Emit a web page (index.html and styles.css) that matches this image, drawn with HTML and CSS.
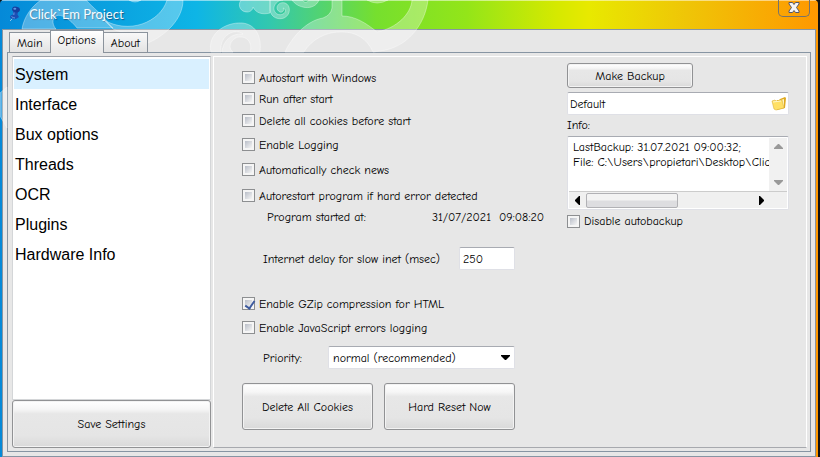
FILE: index.html
```html
<!DOCTYPE html>
<html lang="en">
<head>
<meta charset="utf-8">
<title>Click`Em Project</title>
<link rel="stylesheet" href="styles.css">
</head>
<body>
<div class="window">
  <header class="titlebar">
    <svg class="app-icon" width="12" height="16" viewBox="0 0 12 16" aria-hidden="true">
      <path d="M1 15L4 12" stroke="#8fc3ea"/>
      <path d="M4 5L9 6L8.500 8.500L10 11Q6 15 1 11.500Q1 9 4 8.500Z" fill="#1c4fb4"/>
      <ellipse cx="7" cy="3.500" rx="4" ry="2.800" fill="#163f9f" transform="rotate(12 7 3.500)"/>
      <ellipse cx="5.800" cy="2.800" rx="1.500" ry="1" fill="#5f96e2"/>
      <path d="M5 6.500L4.800 9M2.500 10.500Q4 12 6 12" stroke="#639be4" fill="none"/>
    </svg>
    <h1>Click`Em Project</h1>
    <button class="close" type="button" aria-label="Close">
      <svg width="12" height="11" viewBox="0 0 12 11"><path d="M1 .5H4.500L6 2.500L7.500 .5H11V2L8.500 5.500L11 9V10.500H7.500L6 8.500L4.500 10.500H1V9L3.500 5.500L1 2Z" fill="#f4f4f4" stroke="#55566a"/></svg>
    </button>
  </header>
  <main class="client">
    <div class="tabs" role="tablist">
      <button type="button" role="tab">Main</button>
      <button type="button" role="tab" class="active" aria-selected="true">Options</button>
      <button type="button" role="tab">About</button>
    </div>
    <div class="page">
      <div class="side">
        <nav class="list">
          <a href="#system" class="current">System</a>
          <a href="#interface">Interface</a>
          <a href="#bux">Bux options</a>
          <a href="#threads">Threads</a>
          <a href="#ocr">OCR</a>
          <a href="#plugins">Plugins</a>
          <a href="#hardware">Hardware Info</a>
        </nav>
        <button type="button" class="btn save">Save Settings</button>
      </div>
      <form class="panel" id="system">
        <div class="general">
          <label class="check"><input type="checkbox">Autostart with Windows</label>
          <label class="check"><input type="checkbox">Run after start</label>
          <label class="check"><input type="checkbox">Delete all cookies before start</label>
          <label class="check"><input type="checkbox">Enable Logging</label>
          <label class="check"><input type="checkbox">Automatically check news</label>
          <label class="check"><input type="checkbox">Autorestart program if hard error detected</label>
          <div class="started"><span>Program started at:</span><time>31/07/2021&nbsp; 09:08:20</time></div>
          <div class="field"><label for="delay">Internet delay for slow inet (msec)</label><input id="delay" class="box delay" type="text" value="250"></div>
          <label class="check"><input type="checkbox" checked>Enable GZip compression for HTML</label>
          <label class="check"><input type="checkbox">Enable JavaScript errors logging</label>
          <div class="field"><label for="priority">Priority:</label>
            <span class="combo"><select id="priority" class="box"><option>normal (recommended)</option></select>
            <svg width="9" height="5" viewBox="0 0 9 5" aria-hidden="true"><path d="M0 0H9V1L5 5H4L0 1Z"/></svg></span>
          </div>
          <div class="actions"><button type="button" class="btn">Delete All Cookies</button><button type="button" class="btn">Hard Reset Now</button></div>
        </div>
        <div class="backup">
          <button type="button" class="btn make">Make Backup</button>
          <div class="box file">
            <input type="text" value="Default" aria-label="Backup name">
            <button type="button" aria-label="Browse">
              <svg width="16" height="14" viewBox="0 0 16 14"><path d="M6 3L8 3L9 2L14 0L15 1L14 11L6 13Z" fill="#dfa91f"/><path d="M7 4L13 2L13 10L7 12Z" fill="#fff6c4"/><path d="M1 4L4 3L5 4L11 3L13 11L5 13L3 12Z" fill="#ffe066" stroke="#dcb23a" stroke-width=".6"/><path d="M2 5L10 4" stroke="#fff7c8"/></svg>
            </button>
          </div>
          <label class="info" for="info">Info:</label>
          <div class="box memo">
            <textarea id="info" readonly wrap="off">LastBackup: 31.07.2021 09:00:32;
File: C:\Users\propietari\Desktop\ClickEm</textarea>
            <div class="vbar" aria-hidden="true">
              <svg width="9" height="5" viewBox="0 0 9 5"><path d="M4 0H5L9 4V5H0V4Z"/></svg>
              <svg width="9" height="5" viewBox="0 0 9 5"><path d="M0 0H9V1L5 5H4L0 1Z"/></svg>
            </div>
            <div class="hbar" aria-hidden="true">
              <svg width="5" height="9" viewBox="0 0 5 9"><path d="M5 0V9H4L0 5V4L4 0Z"/></svg>
              <span class="thumb"></span>
              <svg width="5" height="9" viewBox="0 0 5 9"><path d="M0 0V9H1L5 5V4L1 0Z"/></svg>
            </div>
          </div>
          <label class="check"><input type="checkbox">Disable autobackup</label>
        </div>
      </form>
    </div>
  </main>
  <svg class="swirls" width="440" height="130" viewBox="0 0 440 130" aria-hidden="true">
    <g class="glow">
      <path d="M22 29C24 17 31 7 41 0H86C93 8 103 15 108 23L113 28H77C71 20 61 13 56 16C51 19 53 26 56 29Z"/>
      <path d="M167 0C164 11 154 20 142 24C130 28 116 27 104 20L113 29C119 32 128 34 139 31C135 36 142 43 148 43C166 35 183 19 183 0Z"/>
      <path d="M129 0Q135 4 141 0Z"/>
      <path d="M241 0C237 6 241 12 247 12C251 12 253 9 253 7C256 13 262 15 270 13V0Z"/>
      <path d="M211 52C207 35 224 22 242 23C254 24 262 34 260 52H250C253 43 247 36 239 37C231 38 227 48 233 52H222C223 41 231 33 243 34C236 28 219 34 221 52Z"/>
      <path d="M270 10C271 18 279 20 284 18C291 15 291 5 285 3C278 1 274 9 280 12C282 13 285 10 283 8C289 10 283 17 277 14C270 9 276 0 283 0H270Z"/>
      <path d="M292 0C297 8 314 12 319 0H309Q306 5 302 0Z"/>
      <path d="M367 0Q377 6 388 0Z"/>
      <path d="M332 0H342V16C355 16 366 23 377 32C397 28 411 14 412 0H428C425 25 407 48 380 51L373 52C367 38 355 32 343 32C326 31 311 40 304 52H285C291 39 305 21 323 18Q331 15 332 8Z"/>
      <path d="M0 93L7 87V128L0 116Z"/>
    </g>
  </svg>
</div>
</body>
</html>
```

FILE: styles.css
```css
* { box-sizing: border-box; }

body {
  margin: 0;
  background: #111;
  color: #000;
  font: 12px/16px "Comic Neue", Lato, "Open Sans", sans-serif;
}

button, input, select, textarea { font: inherit; color: inherit; margin: 0; }

.window {
  position: relative;
  display: flex;
  flex-direction: column;
  min-height: 100vh;
  margin-right: 2px;
  padding: 0 2px 0 2px;
  border-radius: 4px 4px 0 0;
  background: linear-gradient(90deg, #0589d8 0, #0eb5e6 24%, #32c8ae 33%, #76df2e 46%, #93e519 57%, #d5e900 68%, #e8e900 72%, #efc507 84%, #ff9800 100%);
}

.titlebar {
  display: flex;
  align-items: flex-start;
  height: 29px;
  padding: 0 6px 0 7px;
  box-shadow: inset 0 1px rgba(255, 255, 255, .5);
}

.app-icon { margin-top: 6px; }

h1 {
  flex: 1;
  margin: 4px 0 0 8px;
  color: #f4fcff;
  font: 13px/20px Lato, "Open Sans", sans-serif;
  text-shadow: 1px 1px 1px #175985;
}

.close {
  display: flex;
  justify-content: center;
  width: 32px;
  height: 17px;
  padding: 2px 0 0;
  border: 1px solid #76736c;
  border-top: 0;
  border-radius: 0 0 5px 5px;
  background: none;
}

.client {
  flex: 1;
  display: flex;
  flex-direction: column;
  padding: 0 4px 4px;
  border: 1px solid #8795a3;
  background: #e7e7e7;
}

.tabs {
  position: relative;
  z-index: 2;
  display: flex;
  align-items: flex-end;
  height: 23px;
  margin-bottom: -1px;
  padding-left: 2px;
}

.tabs button {
  height: 21px;
  padding: 0 7px;
  border: 1px solid #8b939c;
  background: linear-gradient(#f8f8f8, #e3e3e3);
}

.tabs .active {
  height: 23px;
  margin: 0 -1px;
  padding-bottom: 4px;
  border-bottom: 0;
  background: linear-gradient(#fff, #e7e7e7);
}

.page {
  flex: 1;
  display: flex;
  gap: 2px;
  padding: 3px 3px 3px 4px;
  border: 1px solid #8795a3;
  background: #e7e7e7;
}

.side {
  display: flex;
  flex-direction: column;
  width: 199px;
}

.list {
  flex: 1;
  padding: 2px 1px;
  border: 1px solid #d4d6d8;
  border-top-color: #9da1a8;
  background: #fff;
}

.list a {
  display: block;
  padding: 1px 1px 0;
  color: #000;
  font: 16px/29px "Liberation Sans", sans-serif;
  text-decoration: none;
}

.list .current { background: #d9f0ff; }

.btn {
  border: 1px solid #919294;
  border-radius: 3px;
  background: linear-gradient(#fff 0, #f6f6f6 18%, #e7e7e7 28%, #e5e5e5 75%, #d9d9d9 100%);
  box-shadow: inset 0 0 0 1px #f3f3f3;
}

.save { height: 48px; }

.panel {
  flex: 1;
  display: flex;
  gap: 52px;
  padding: 0 17px 0 28px;
  border: 1px solid #fff;
  border-bottom-color: #a7a9ae;
}

.general {
  display: grid;
  grid-template-rows: 21px 21px 23px 25px 25px 27px 16px 67px 23px 25px 35px 47px;
  align-items: center;
  align-content: start;
  width: 273px;
  padding-top: 10px;
}

.check { display: flex; align-items: center; gap: 4px; white-space: nowrap; }

.check input {
  appearance: none;
  width: 13px;
  height: 13px;
  border: 1px solid #8d8f91;
  background: linear-gradient(135deg, #b9bec8, #f5f5f5) 2px 2px / 7px 7px no-repeat #f5f5f5;
}

.check input:checked { position: relative; }

.check input:checked::after {
  content: "";
  position: absolute;
  left: 4px;
  top: 1px;
  width: 4px;
  height: 8px;
  border: solid #3e5b9e;
  border-width: 0 2px 2px 0;
  transform: rotate(35deg);
}

.started { display: flex; padding-left: 25px; white-space: nowrap; }

.started time { margin-left: auto; margin-right: -29px; }

.field {
  display: flex;
  align-items: center;
  justify-content: space-between;
  padding-left: 21px;
}

.box {
  height: 23px;
  border: 1px solid #dfe0e6;
  border-top-color: #a8abb2;
  border-radius: 2px;
  background: #fff;
}

.delay { width: 56px; padding: 0 3px; }

.combo { position: relative; width: 187px; }

.combo select { display: block; appearance: none; width: 100%; padding: 0 4px; }

.combo svg { position: absolute; right: 5px; top: 9px; pointer-events: none; }

.actions {
  display: grid;
  grid-template-columns: 1fr 1fr;
  gap: 11px;
  align-self: end;
  height: 47px;
  margin-bottom: -8px;
}

.backup {
  flex: 1;
  display: flex;
  flex-direction: column;
  min-width: 0;
  padding-top: 6px;
}

.make { width: 126px; height: 25px; margin-bottom: 4px; }

.file { display: flex; align-items: center; padding: 0 1px 0 2px; }

.file input { flex: 1; min-width: 0; padding: 0; border: 0; background: none; }

.file button { display: flex; padding: 0; border: 0; background: none; }

.info { padding: 2px 0 3px; }

.memo {
  display: grid;
  grid-template: 1fr 17px / 1fr 18px;
  height: 74px;
  margin-bottom: 3px;
  padding: 1px;
}

.memo textarea {
  width: 100%;
  height: 100%;
  padding: 2px 0 0 4px;
  border: 0;
  background: none;
  resize: none;
  overflow: hidden;
  line-height: 15px;
}

.vbar {
  display: flex;
  flex-direction: column;
  align-items: center;
  justify-content: space-between;
  padding: 6px 0;
  background: #f1f1f1;
  fill: #999;
}

.hbar {
  grid-column: 1 / 3;
  display: flex;
  align-items: center;
  padding: 0 23px 0 6px;
  border-top: 1px solid #ccc;
  background: #f0f0f0;
}

.thumb {
  width: 92px;
  height: 15px;
  margin: 0 auto 0 6px;
  border: 1px solid #b1b1b5;
  border-radius: 2px;
  background: linear-gradient(#f3f3f3 45%, #dddde0 55%);
}

.swirls {
  position: absolute;
  left: 0;
  top: 0;
  pointer-events: none;
}

.glow {
  fill: rgba(255, 255, 255, .3);
  stroke: rgba(255, 255, 255, .35);
  stroke-width: 1;
}
```
